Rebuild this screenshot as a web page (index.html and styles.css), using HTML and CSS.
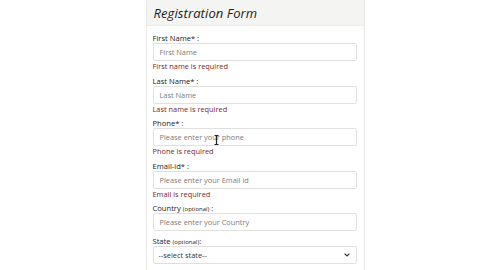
FILE: index.html
```html
<!DOCTYPE html>
<html>
<head>
<meta charset="utf-8">
<link rel="stylesheet" href="styles.css">
</head>
<body>
<div class="page">
  <div class="card">
    <div class="card-head"><h1 class="title">Registration Form</h1></div>
    <div class="card-body">
      <div class="group">
        <label class="label">First Name* :</label>
        <div class="input"><span class="ph">First Name</span></div>
        <div class="error">First name is required</div>
      </div>
      <div class="group">
        <label class="label">Last Name* :</label>
        <div class="input"><span class="ph">Last Name</span></div>
        <div class="error">Last name is required</div>
      </div>
      <div class="group">
        <label class="label">Phone* :</label>
        <div class="input cursor-host"><span class="ph">Please enter your phone</span>
          <svg class="cursor" width="5" height="10" viewBox="0 0 5 10"><path d="M0.5 0.5h4M2.5 0.5v9M0.5 9.5h4" stroke="#222" stroke-width="1.2" fill="none"/></svg>
        </div>
        <div class="error">Phone is required</div>
      </div>
      <div class="group">
        <label class="label">Email-id* :</label>
        <div class="input"><span class="ph">Please enter your Email id</span></div>
        <div class="error">Email is required</div>
      </div>
      <div class="group">
        <label class="label">Country <small class="opt">(optional)</small> :</label>
        <div class="input"><span class="ph">Please enter your Country</span></div>
      </div>
      <div class="group">
        <label class="label">State <small class="opt">(optional)</small>:</label>
        <div class="input select"><span class="val">--select state--</span>
          <svg class="chev" width="6" height="4" viewBox="0 0 6 4"><path d="M0.6 0.6L3 3L5.4 0.6" stroke="#333" stroke-width="1.2" fill="none"/></svg>
        </div>
      </div>
    </div>
  </div>
</div>
</body>
</html>
```
FILE: styles.css
```css
* { box-sizing: border-box; }
html, body { margin: 0; padding: 0; background: #fff; }
body { font-family: "Open Sans", "DejaVu Sans", sans-serif; color: #212529; }
.page { display: flex; justify-content: center; padding-left: 30px; }
.card {
  width: 219px;
  height: 280px;
  border-left: 1px solid #e8e8e6;
  border-right: 1px solid #e8e8e6;
  background: #fff;
}
.card-head {
  height: 26px;
  background: #f4f4f2;
  border-bottom: 1px solid #ecece9;
  display: flex;
  align-items: center;
  padding-left: 7px;
}
.title {
  margin: 0;
  font-size: 13px;
  font-weight: 400;
  font-style: italic;
  color: #1c1c1c;
  letter-spacing: 0.1px;
}
.card-body { padding: 7px 7px 0 6px; display: flex; flex-direction: column; gap: 4.6px; }
.group { display: flex; flex-direction: column; }
.label { font-size: 7.6px; line-height: 10px; height: 10px; color: #222; }
.opt { font-size: 6px; }
.input {
  position: relative;
  height: 18px;
  border: 1px solid #e0e0de;
  border-radius: 2px;
  display: flex;
  align-items: center;
  padding-left: 6px;
  font-size: 7.4px;
}
.ph { color: #7c7c7c; }
.error { font-size: 7.4px; line-height: 10px; height: 10px; color: #7a1f2a; }
.select { justify-content: space-between; padding-right: 6px; padding-left: 5px; }
.val { color: #333; }
.cursor { position: absolute; left: 60px; top: 6px; }
```
